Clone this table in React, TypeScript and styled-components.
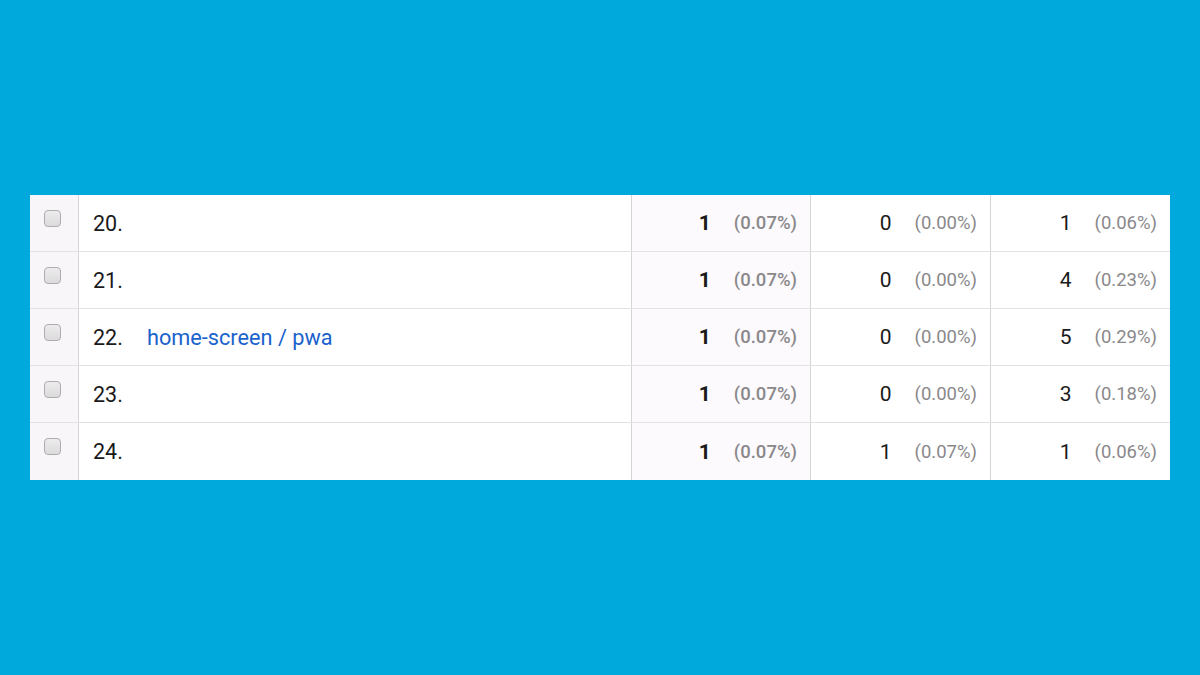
import React from "react";
import styled, { createGlobalStyle } from "styled-components";

const Global = createGlobalStyle`
  html, body { margin: 0; padding: 0; }
  body {
    background: #00a9db;
    font-family: Roboto, "Noto Sans", "Liberation Sans", sans-serif;
  }
`;

const Page = styled.div`
  width: 1200px;
  height: 675px;
  display: flex;
  align-items: center;
  justify-content: center;
`;

const Table = styled.div`
  width: 1140px;
  background: #ffffff;
  display: flex;
  flex-direction: column;
`;

const Row = styled.div<{ $last?: boolean }>`
  display: grid;
  grid-template-columns: 49px 553px 179px 180px 179px;
  height: 57px;
  box-sizing: border-box;
  border-bottom: ${(p) => (p.$last ? "none" : "1.5px solid #e3e1e4")};
`;

const CheckCell = styled.div`
  background: #f8f6f8;
  border-right: 1.5px solid #d6d4d7;
  padding: 15px 0 0 14px;
  box-sizing: border-box;
`;

const Box = styled.div`
  width: 17px;
  height: 17px;
  box-sizing: border-box;
  border: 1.5px solid #aeacaf;
  border-radius: 4px;
  background: linear-gradient(#ececec, #dcdbdc);
`;

const NameCell = styled.div`
  display: flex;
  align-items: center;
  padding-left: 14px;
  border-right: 1.5px solid #d6d4d7;
  box-sizing: border-box;
  font-size: 21.5px;
  color: #1a1a1a;
`;

const Index = styled.span`
  width: 54px;
`;

const Link = styled.span`
  color: #1a62cc;
  font-size: 21.7px;
`;

const MetricCell = styled.div<{ $tint?: boolean; $last?: boolean }>`
  display: flex;
  align-items: center;
  justify-content: flex-end;
  gap: 23px;
  padding-right: 13px;
  box-sizing: border-box;
  background: ${(p) => (p.$tint ? "#fcfafc" : "#ffffff")};
  border-right: ${(p) => (p.$last ? "none" : "1.5px solid #d6d4d7")};
`;

const Value = styled.span<{ $bold?: boolean }>`
  font-size: 21px;
  font-weight: ${(p) => (p.$bold ? 700 : 400)};
  color: #1a1a1a;
`;

const Pct = styled.span<{ $bold?: boolean }>`
  font-size: 18.5px;
  font-weight: ${(p) => (p.$bold ? 500 : 400)};
  color: #8a888b;
`;

const rows = [
  { n: "20.", name: "", a: ["1", "(0.07%)"], b: ["0", "(0.00%)"], c: ["1", "(0.06%)"] },
  { n: "21.", name: "", a: ["1", "(0.07%)"], b: ["0", "(0.00%)"], c: ["4", "(0.23%)"] },
  { n: "22.", name: "home-screen / pwa", a: ["1", "(0.07%)"], b: ["0", "(0.00%)"], c: ["5", "(0.29%)"] },
  { n: "23.", name: "", a: ["1", "(0.07%)"], b: ["0", "(0.00%)"], c: ["3", "(0.18%)"] },
  { n: "24.", name: "", a: ["1", "(0.07%)"], b: ["1", "(0.07%)"], c: ["1", "(0.06%)"] },
];

export default function App() {
  return (
    <>
      <Global />
      <Page>
        <Table>
          {rows.map((r, i) => (
            <Row key={r.n} $last={i === rows.length - 1}>
              <CheckCell>
                <Box />
              </CheckCell>
              <NameCell>
                <Index>{r.n}</Index>
                {r.name && <Link>{r.name}</Link>}
              </NameCell>
              <MetricCell $tint>
                <Value $bold>{r.a[0]}</Value>
                <Pct $bold>{r.a[1]}</Pct>
              </MetricCell>
              <MetricCell>
                <Value>{r.b[0]}</Value>
                <Pct>{r.b[1]}</Pct>
              </MetricCell>
              <MetricCell $last>
                <Value>{r.c[0]}</Value>
                <Pct>{r.c[1]}</Pct>
              </MetricCell>
            </Row>
          ))}
        </Table>
      </Page>
    </>
  );
}
